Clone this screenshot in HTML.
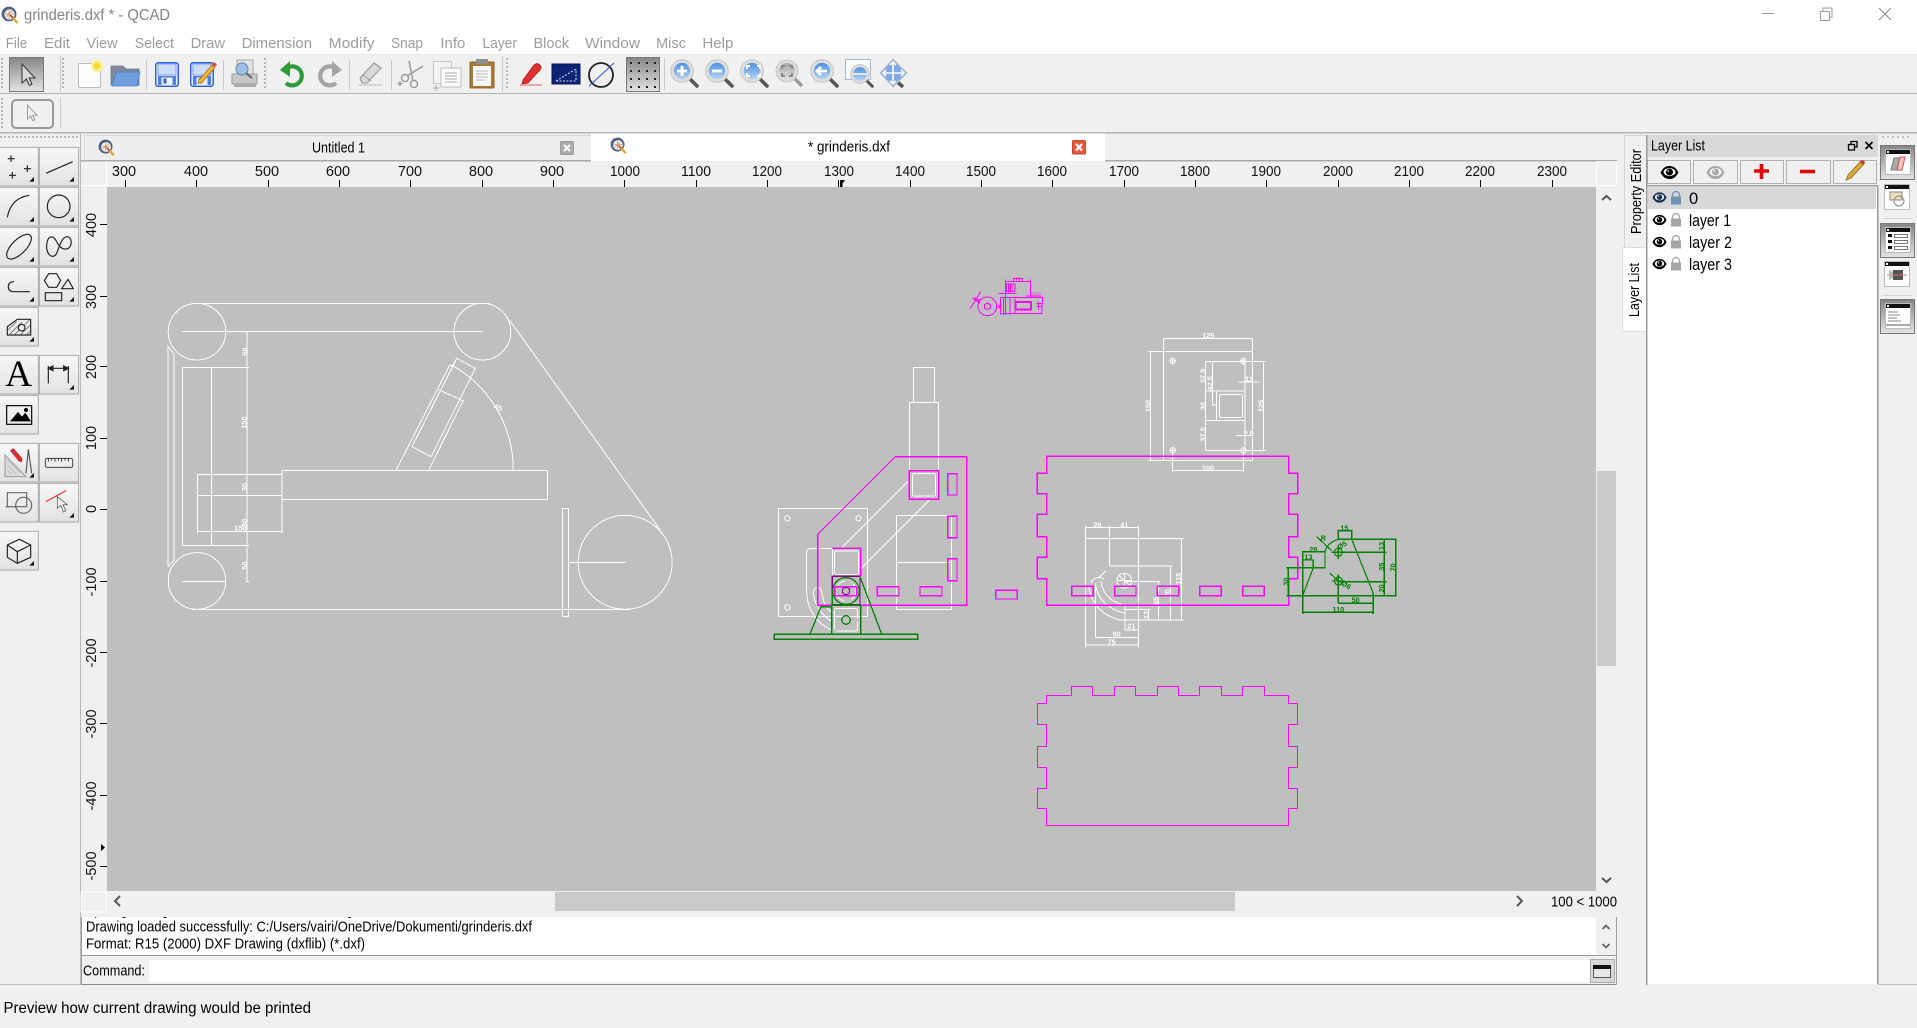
<!DOCTYPE html>
<html><head><meta charset="utf-8"><title>grinderis.dxf * - QCAD</title>
<style>
html,body{margin:0;padding:0;background:#f0f0f0;overflow:hidden}
svg{display:block}
text{font-family:"Liberation Sans",sans-serif;fill:#000}
.m{font-size:15px;fill:#9c9c9c}
.r{font-size:14.5px;text-anchor:middle;fill:#111}
.d *{vector-effect:non-scaling-stroke}
.d{fill:none;stroke-width:1;shape-rendering:crispEdges}
.d text{stroke:none;text-anchor:middle;font-size:22px;font-weight:bold}
.w{stroke:#fff}.w text{fill:#fff}
.p{stroke:#f0f}.p text{fill:#f0f}
.g{stroke:#008000}.g text{fill:#008000}
.c{shape-rendering:crispEdges}
</style></head><body>
<svg xmlns="http://www.w3.org/2000/svg" width="1917" height="1028" viewBox="0 0 1917 1028">
<defs>
<linearGradient id="b" x1="0" y1="0" x2="0" y2="1"><stop offset="0" stop-color="#f7f7f7"/><stop offset="1" stop-color="#e2e2e2"/></linearGradient>
<linearGradient id="a" x1="0" y1="0" x2="0" y2="1"><stop offset="0" stop-color="#868686"/><stop offset="1" stop-color="#e4e4e4"/></linearGradient>
<linearGradient id="zb" x1="0" y1="0" x2="0" y2="1"><stop offset="0" stop-color="#4f92e2"/><stop offset="1" stop-color="#b5d3f2"/></linearGradient>
<linearGradient id="zg" x1="0" y1="0" x2="0" y2="1"><stop offset="0" stop-color="#a8a8a8"/><stop offset="1" stop-color="#dcdcdc"/></linearGradient>
<clipPath id="lg"><rect x="82" y="917" width="1514" height="38"/></clipPath>
<symbol id="q" viewBox="0 0 18 18" overflow="visible">
<circle cx="8" cy="8" r="7.4" fill="#4e5f86"/><circle cx="8.5" cy="8.5" r="5.2" fill="#f4f1e6"/>
<path d="M4 8h9M8 4v9M5 11l6-6" stroke="#c98f6c" stroke-width=".8" fill="none"/>
<path d="M11 11l5.500 6" stroke="#e0a52e" stroke-width="2.400"/><path d="M9 9l3 3" stroke="#b03a2a" stroke-width="1.500"/>
</symbol>
<symbol id="z" viewBox="0 0 29 29" overflow="visible">
<path d="M19 19l8 8" stroke="#555" stroke-width="3.600" stroke-linecap="round"/><path d="M17 17l3 3" stroke="#aaa" stroke-width="3"/>
<circle cx="12" cy="12" r="11.300" fill="#dedede" stroke="#c4c4c4"/>
<circle cx="12" cy="12" r="8.200" fill="url(#zb)"/>
</symbol>
<symbol id="sv" viewBox="0 0 24 25" overflow="visible">
<rect x=".7" y=".7" width="22.600" height="23.600" rx="2.500" fill="#dfe8fa" stroke="#2d5fd8" stroke-width="1.400"/>
<rect x="3" y="2" width="18" height="11" fill="#cfdcf8" stroke="#6f94e6" stroke-width=".8"/>
<rect x="3" y="14" width="18" height="9" fill="#4f7fe0"/><rect x="6.500" y="15.500" width="11" height="7.500" fill="#eef1f8"/><rect x="8.500" y="16.500" width="3" height="5" fill="#3a62b8"/>
</symbol>
<symbol id="eye" viewBox="0 0 18 14" overflow="visible">
<path d="M.5 7C3 2 6 .8 9 .8S15 2 17.500 7C15 12 12 13.200 9 13.200S3 12 .5 7Z" fill="currentColor"/>
<ellipse cx="9" cy="6.600" rx="5.600" ry="3.800" fill="#fff"/><circle cx="9" cy="6.600" r="3.300" fill="currentColor"/><circle cx="7.800" cy="5.600" r=".8" fill="#fff"/>
</symbol>
<symbol id="lk" viewBox="0 0 10 14" overflow="visible">
<rect x="0" y="5.500" width="10" height="8" fill="currentColor"/><path d="M1.500 6V4a3.500 3.500 0 017 0v2" fill="none" stroke="currentColor" stroke-width="1.300"/>
</symbol>
<symbol id="win" viewBox="0 0 26 26" overflow="visible">
<rect x=".5" y=".5" width="25" height="25" fill="#fff" stroke="#bbb"/><rect x="1" y="1" width="24" height="4" fill="#111"/><rect x="2" y="2" width="2" height="2" fill="#fff"/>
</symbol>
</defs>

<!-- title and menu -->
<rect width="1917" height="54" fill="#fff"/>
<rect y="54" width="1917" height="1" fill="#e8e8e8"/>
<use href="#q" x="1" y="6" width="18" height="18"/>
<text x="24" y="20" font-size="15.500" style="fill:#848484" textLength="146" lengthAdjust="spacingAndGlyphs">grinderis.dxf * - QCAD</text>
<g class="c" stroke="#999" fill="none"><path d="M1762 13.500h12"/><rect x="1820.500" y="11.500" width="9" height="9"/><path d="M1823 11v-3h9v9h-2.500"/></g>
<path d="M1879 8l12 12M1891 8l-12 12" stroke="#8a8a8a" fill="none"/>
<text class="m" x="5.700" y="48" textLength="21.600" lengthAdjust="spacingAndGlyphs">File</text>
<text class="m" x="44" y="48" textLength="26" lengthAdjust="spacingAndGlyphs">Edit</text>
<text class="m" x="86.500" y="48" textLength="31" lengthAdjust="spacingAndGlyphs">View</text>
<text class="m" x="134.700" y="48" textLength="39.300" lengthAdjust="spacingAndGlyphs">Select</text>
<text class="m" x="190.600" y="48" textLength="34.400" lengthAdjust="spacingAndGlyphs">Draw</text>
<text class="m" x="241.600" y="48" textLength="70.400" lengthAdjust="spacingAndGlyphs">Dimension</text>
<text class="m" x="328.600" y="48" textLength="46" lengthAdjust="spacingAndGlyphs">Modify</text>
<text class="m" x="391" y="48" textLength="32" lengthAdjust="spacingAndGlyphs">Snap</text>
<text class="m" x="440.400" y="48" textLength="25" lengthAdjust="spacingAndGlyphs">Info</text>
<text class="m" x="482.400" y="48" textLength="34.600" lengthAdjust="spacingAndGlyphs">Layer</text>
<text class="m" x="533.500" y="48" textLength="35.500" lengthAdjust="spacingAndGlyphs">Block</text>
<text class="m" x="585" y="48" textLength="55" lengthAdjust="spacingAndGlyphs">Window</text>
<text class="m" x="656" y="48" textLength="30" lengthAdjust="spacingAndGlyphs">Misc</text>
<text class="m" x="702.400" y="48" textLength="31" lengthAdjust="spacingAndGlyphs">Help</text>

<!-- toolbars -->
<g class="c">
<rect y="93" width="1917" height="1" fill="#b4b4b4"/><rect y="132" width="1917" height="1.500" fill="#b4b4b4"/>
<path d="M2 58v32M63 58v32M265 58v32M507 58v32M2 98v30" stroke="#b8b8b8" stroke-width="2" stroke-dasharray="2 2"/>
<path d="M60.500 56v36M146.500 60v30M223.500 60v30M349.500 60v30M391.500 60v30M502.500 56v36M664.500 58v32M60.500 98v30" stroke="#c8c8c8"/>
<rect x="9.500" y="57.500" width="34" height="34" fill="url(#a)" stroke="#777"/>
<rect x="626.500" y="57.500" width="33" height="34" fill="url(#a)" stroke="#777"/>
<g fill="#222"><rect x="630" y="62" width="2" height="2"/><rect x="638" y="62" width="2" height="2"/><rect x="646" y="62" width="2" height="2"/><rect x="654" y="62" width="2" height="2"/><rect x="630" y="70" width="2" height="2"/><rect x="638" y="70" width="2" height="2"/><rect x="646" y="70" width="2" height="2"/><rect x="654" y="70" width="2" height="2"/><rect x="630" y="78" width="2" height="2"/><rect x="638" y="78" width="2" height="2"/><rect x="646" y="78" width="2" height="2"/><rect x="654" y="78" width="2" height="2"/><rect x="630" y="86" width="2" height="2"/><rect x="638" y="86" width="2" height="2"/><rect x="646" y="86" width="2" height="2"/><rect x="654" y="86" width="2" height="2"/></g>
</g>
<path d="M22 64v19l4.500-4 2.800 6.500 2.700-1.200-2.800-6.300 5.800 0Z" fill="#d8d8d8" stroke="#333" stroke-width="1"/>
<!-- new -->
<rect x="78.500" y="63.500" width="22" height="24" rx="1" fill="#fdfdfd" stroke="#bbb"/><circle cx="97" cy="66" r="6" fill="#f7f39a"/><circle cx="97" cy="66" r="3.600" fill="#f3e02c"/>
<!-- open -->
<path d="M111 66h12l3 3h13v16h-28Z" fill="#7f8b9c" stroke="#6b7686" stroke-width=".8"/><path d="M112 86l4-14h24l-3 14Z" fill="#6e9fdc" stroke="#4a7fc0" stroke-width=".8"/>
<!-- save -->
<use href="#sv" x="155" y="62" width="24" height="25"/>
<use href="#sv" x="190" y="62" width="24" height="25"/>
<path d="M199 80l13-15 3 2.500-13 15-4 1Z" fill="#f0b63c" stroke="#a86c14" stroke-width=".8"/><path d="M212 64l2-2 3 2.500-2 2.500Z" fill="#e0483a"/>
<!-- print preview -->
<rect x="237" y="60" width="16" height="14" fill="#e2e2e2" stroke="#aaa"/><path d="M232 74h25v10h-25Z" fill="#c6c6c6" stroke="#999"/><rect x="234" y="84" width="22" height="3" fill="#aaa"/><circle cx="242" cy="69" r="6" fill="#9cc0ea" stroke="#6c8fb8" stroke-width="1.200"/><path d="M246 73l6 5" stroke="#666" stroke-width="2"/>
<!-- undo redo -->
<path d="M287 68A9.500 9.500 0 1 1 286 83" fill="none" stroke="#2f9a3c" stroke-width="4.200"/><path d="M280 70l10-9v16Z" fill="#2f9a3c"/>
<path d="M335 68A9.500 9.500 0 1 0 336 83" fill="none" stroke="#a4a4a4" stroke-width="4.200"/><path d="M342 70l-10-9v16Z" fill="#a4a4a4"/>
<!-- erase -->
<path d="M360 78l14-15 7 5-14 15h-5Z" fill="#d8d8d8" stroke="#999" stroke-width="1.100"/><path d="M363 75l8 6" stroke="#999"/><path d="M358 85h24" stroke="#ccc" stroke-width="1.500"/>
<!-- cut -->
<g fill="none" stroke="#9a9a9a" stroke-width="1.500"><path d="M409 61l4 20M423 66l-16 10"/><circle cx="405" cy="78" r="3.500"/><circle cx="414" cy="84" r="3.500"/><path d="M400 81v5M397.500 83.500h5"/></g>
<!-- copy -->
<rect x="433.500" y="61.500" width="18" height="22" fill="#f4f4f4" stroke="#c4c4c4"/><path d="M441 68h20v19h-20Z" fill="#fbfbfb" stroke="#bbb"/><path d="M445 73h12M445 76h12M445 79h12M445 82h12" stroke="#aaa"/><path d="M436 85v6M433 88h6" stroke="#aaa"/>
<!-- paste -->
<rect x="470" y="62" width="24" height="26" rx="1" fill="#a77b3b" stroke="#8a6226"/><rect x="473" y="66" width="18" height="20" fill="#f7f7f7"/><rect x="476" y="59" width="12" height="5" fill="#8e8e8e"/><path d="M476 71h12M476 74h12M476 77h12M476 80h9" stroke="#bbb"/>
<!-- pencil -->
<path d="M523 80l11-15c2-2 4-2 6 0 1.500 2 1.500 3 0 5l-12 13-6 1Z" fill="#e02f2f" stroke="#a81f1f" stroke-width=".8"/><path d="M520 85h22" stroke="#f08a8a" stroke-width="1.600"/>
<!-- dim blue -->
<rect x="552" y="64" width="28" height="20" fill="#0c2274" stroke="#071750"/><path d="M556 81h20v-12M556 81l20-12" stroke="#d4dcf8" stroke-width="1.100" stroke-dasharray="2 1.500" fill="none"/>
<!-- circle line -->
<circle cx="601" cy="75" r="12" fill="none" stroke="#222" stroke-width="1.800"/><path d="M589 86l25-23" stroke="#2f4fe0" stroke-width="1"/>
<!-- zoom icons -->
<use href="#z" x="670" y="59" width="29" height="29"/><path d="M677 71h10M682 66v10" stroke="#fff" stroke-width="2.800"/>
<use href="#z" x="705" y="59" width="29" height="29"/><path d="M712 71h10" stroke="#fff" stroke-width="2.800"/>
<use href="#z" x="740" y="59" width="29" height="29"/><path d="M747 69v-3h3M757 66h3v3M760 73v3h-3M750 76h-3v-3" stroke="#fff" stroke-width="2" fill="none"/>
<path d="M794 78l8 8" stroke="#999" stroke-width="3.400"/><circle cx="787" cy="71" r="11" fill="#dcdcdc" stroke="#c8c8c8"/><circle cx="787" cy="71" r="8" fill="url(#zg)"/><path d="M782 69v-3h3M789 66h3v3M792 73v3h-3M785 76h-3v-3" stroke="#888" stroke-width="2" fill="none"/>
<use href="#z" x="810" y="59" width="29" height="29"/><path d="M817 71h10M821 67l-4 4 4 4" stroke="#fff" stroke-width="2.600" fill="none"/>
<rect x="845.500" y="59.500" width="25" height="20" fill="#fff" stroke="#9bb8e0"/><use href="#z" x="850" y="64" width="24" height="24"/><path d="M853 74h14" stroke="#dbe8f8" stroke-width="2"/>
<path d="M893 78l10 9" stroke="#555" stroke-width="3.600"/><path d="M893 59l14 14-14 14-13-14Z" fill="#7fa8e4" stroke="#c4c4c4"/><path d="M893 62v22M883 73h21M890 65l3-3 3 3M890 81l3 3 3-3M886 70l-3 3 3 3M901 70l3 3-3 3" stroke="#fff" stroke-width="1.600" fill="none"/>
<!-- second toolbar button -->
<rect x="12" y="100" width="41" height="28" rx="4" fill="#f0f0f0" stroke="#999" stroke-width="2"/>
<path d="M27.500 105v14l3.200-3 2 4.600 2-.9-2-4.500 4.200 0Z" fill="#f0f0f0" stroke="#9a9a9a" stroke-width="1"/>

<!-- tab bar -->
<rect x="84.500" y="135.500" width="507" height="25" fill="#eeeeee" stroke="#d8d8d8" class="c"/>
<use href="#q" x="98" y="139" width="17" height="17"/>
<text x="312" y="152.700" font-size="14.500" textLength="53" lengthAdjust="spacingAndGlyphs">Untitled 1</text>
<rect x="560.500" y="141.500" width="13" height="13" rx="1" fill="#ababab" stroke="#9a9a9a"/><path d="M564 145l6 6M570 145l-6 6" stroke="#fff" stroke-width="2"/>
<rect x="1105" y="160" width="511" height="1.500" fill="#aaa" class="c"/>
<rect x="81" y="160" width="510" height="1.500" fill="#aaa" class="c"/>
<rect x="591" y="133.500" width="514" height="27.500" fill="#fff" class="c"/>
<use href="#q" x="610" y="137" width="17" height="17"/>
<text x="808" y="151.700" font-size="14.500" textLength="82" lengthAdjust="spacingAndGlyphs">* grinderis.dxf</text>
<rect x="1072.500" y="140.500" width="13" height="13.500" rx="1" fill="#e25b3c" stroke="#c9452a"/><path d="M1076 144l6 6.500M1082 144l-6 6.500" stroke="#fff" stroke-width="2.200"/>

<!-- canvas -->
<rect x="107" y="187" width="1489" height="704" fill="#bfbfbf" class="c"/>

<!-- rulers -->
<g class="c">
<path d="M80.500 134v850" stroke="#b8b8b8"/>
<path d="M106.500 161v25M81 185.500h25.500" stroke="#fff"/>
<path d="M125.500 180v7M196.500 180v7M268.500 180v7M339.500 180v7M410.500 180v7M482.500 180v7M553.500 180v7M624.500 180v7M696.500 180v7M767.500 180v7M838.500 180v7M910.500 180v7M981.500 180v7M1052.500 180v7M1124.500 180v7M1195.500 180v7M1266.500 180v7M1338.500 180v7M1409.500 180v7M1480.500 180v7M1552.500 180v7" stroke="#000"/>
<path d="M100 224.500h7M100 296.500h7M100 366.500h7M100 438.500h7M100 509.500h7M100 581.500h7M100 652.500h7M100 723.500h7M100 795.500h7M100 866.500h7" stroke="#000"/>
</g>
<path d="M840 180h5l-2.500 3.500v3.500h-2.500Z" fill="#000"/><path d="M101 844v7l4-3.500Z" fill="#000"/>
<text class="r" x="124" y="176">300</text><text class="r" x="196" y="176">400</text><text class="r" x="267" y="176">500</text><text class="r" x="338" y="176">600</text><text class="r" x="410" y="176">700</text><text class="r" x="481" y="176">800</text><text class="r" x="552" y="176">900</text>
<text class="r" x="625" y="176" textLength="30" lengthAdjust="spacingAndGlyphs">1000</text><text class="r" x="696" y="176" textLength="30" lengthAdjust="spacingAndGlyphs">1100</text><text class="r" x="767" y="176" textLength="30" lengthAdjust="spacingAndGlyphs">1200</text><text class="r" x="839" y="176" textLength="30" lengthAdjust="spacingAndGlyphs">1300</text><text class="r" x="910" y="176" textLength="30" lengthAdjust="spacingAndGlyphs">1400</text><text class="r" x="981" y="176" textLength="30" lengthAdjust="spacingAndGlyphs">1500</text><text class="r" x="1052" y="176" textLength="30" lengthAdjust="spacingAndGlyphs">1600</text><text class="r" x="1124" y="176" textLength="30" lengthAdjust="spacingAndGlyphs">1700</text><text class="r" x="1195" y="176" textLength="30" lengthAdjust="spacingAndGlyphs">1800</text><text class="r" x="1266" y="176" textLength="30" lengthAdjust="spacingAndGlyphs">1900</text><text class="r" x="1338" y="176" textLength="30" lengthAdjust="spacingAndGlyphs">2000</text><text class="r" x="1409" y="176" textLength="30" lengthAdjust="spacingAndGlyphs">2100</text><text class="r" x="1480" y="176" textLength="30" lengthAdjust="spacingAndGlyphs">2200</text><text class="r" x="1552" y="176" textLength="30" lengthAdjust="spacingAndGlyphs">2300</text>
<g>
<text class="r" transform="translate(96,225) rotate(-90)">400</text><text class="r" transform="translate(96,297) rotate(-90)">300</text><text class="r" transform="translate(96,367) rotate(-90)">200</text><text class="r" transform="translate(96,438) rotate(-90)">100</text><text class="r" transform="translate(96,509) rotate(-90)">0</text>
<text class="r" transform="translate(96,582) rotate(-90)">-100</text><text class="r" transform="translate(96,653) rotate(-90)">-200</text><text class="r" transform="translate(96,724) rotate(-90)">-300</text><text class="r" transform="translate(96,796) rotate(-90)">-400</text><text class="r" transform="translate(96,866) rotate(-90)">-500</text>
</g>

<!-- left tool panel -->
<g transform="translate(0,130) scale(.33333)">
<path d="M0 21H236" stroke="#bbb" stroke-width="6" stroke-dasharray="6 6"/>
<g fill="url(#b)" stroke="#a8a8a8" stroke-width="3">
<rect x="-3" y="52" width="118" height="116"/><rect x="118" y="52" width="118" height="116"/>
<rect x="-3" y="172" width="118" height="116"/><rect x="118" y="172" width="118" height="116"/>
<rect x="-3" y="292" width="118" height="116"/><rect x="118" y="292" width="118" height="116"/>
<rect x="-3" y="412" width="118" height="116"/><rect x="118" y="412" width="118" height="116"/>
<rect x="-3" y="532" width="118" height="116"/>
<rect x="-3" y="676" width="118" height="116"/><rect x="118" y="676" width="118" height="116"/>
<rect x="-3" y="796" width="118" height="116"/>
<rect x="-3" y="940" width="118" height="116"/><rect x="118" y="940" width="118" height="116"/>
<rect x="-3" y="1060" width="118" height="116"/><rect x="118" y="1060" width="118" height="116"/>
<rect x="-3" y="1204" width="118" height="116"/>
</g>
<g fill="#111">
<path d="M88 155h14v-14ZM208 155h14v-14ZM88 275h14v-14ZM208 275h14v-14ZM88 395h14v-14ZM208 395h14v-14ZM88 515h14v-14ZM208 515h14v-14ZM88 635h14v-14ZM208 779h14v-14ZM88 1043h14v-14ZM208 1163h14v-14ZM88 1307h14v-14Z"/>
</g>
<g fill="none" stroke="#222" stroke-width="3.500">
<path d="M23 86h21M33 76v20M72 116h21M82 106v20M27 136h21M37 126v20"/>
<path d="M138 130l80-35"/>
<path d="M22 262Q32 205 88 196"/><circle cx="176" cy="229" r="34"/>
<ellipse cx="57" cy="350" rx="48" ry="21" transform="rotate(-45 57 350)"/>
<path d="M140 345C142 318 158 312 170 335C178 352 190 362 205 355C218 345 216 320 200 320C185 322 178 350 170 370C160 390 138 375 140 345Z"/>
<path d="M90 485H40Q25 485 25 470Q25 455 42 455"/>
<path d="M133 452L146 431H170L182 452L170 472H146ZM185 476L204 448L220 476ZM136 488H185V512H136Z"/>
<path d="M22 615V590L52 568H92V615Z"/>
<path d="M24 600L50 574M30 612L66 576M44 614L60 598M62 614L92 584M80 614L92 602M72 586L88 570" stroke="#555" stroke-width="2"/>
<circle cx="65" cy="593" r="10" fill="#eee"/>
<path d="M145 708V760M205 708V760M145 715H205"/><path d="M145 715l14-7v14ZM205 715l-14-7v14Z" fill="#222"/>
<rect x="20" y="827" width="75" height="56" stroke="#000"/>
<rect x="136" y="985" width="82" height="27" rx="5" stroke="#444" stroke-width="3"/>
<path d="M145 985v10M155 985v7M165 985v10M175 985v7M185 985v10M195 985v7M205 985v10" stroke-width="2.500"/>
<path d="M15 975V1040H78Z" stroke="#999" fill="#dcdcdc" stroke-width="3"/>
<path d="M22 1020l12 12M22 1005l26 26M22 990l38 38" stroke="#aaa" stroke-width="2"/>
<path d="M85 958L78 1030M85 958L95 1030" stroke="#555"/>
<path d="M22 1088H80V1130H22Z" stroke="#666"/><circle cx="71" cy="1126" r="24" stroke="#666"/><path d="M16 1130h12" stroke="#666"/>
<path d="M138 1115L198 1082" stroke="#f03030"/>
<path d="M172 1100V1135L182 1126L190 1146L197 1142L189 1124H202Z" stroke="#666" fill="#eee" stroke-width="2.500"/>
<path d="M22 1245L58 1228L92 1245V1282L52 1300L22 1282ZM22 1245L52 1265L92 1245M52 1265V1300" stroke="#222"/>
</g>
<text x="56" y="768" font-size="112" text-anchor="middle" style="font-family:'Liberation Serif',serif">A</text>
<path d="M30 874l24-28 12 14 10-12 17 26Z" fill="#000"/><circle cx="78" cy="840" r="6" fill="#000"/>
<path d="M32 962l8-6 26 30 -1 9-8-2Z" fill="#e03030" stroke="#a01818" stroke-width="2"/>
</g>

<!-- drawing: left belt grinder -->
<g class="d w" transform="translate(150,280) scale(.35065,.33333)">
<ellipse cx="134" cy="155" rx="82" ry="85"/><ellipse cx="948" cy="155" rx="81" ry="85"/><ellipse cx="134" cy="903" rx="82" ry="85"/><ellipse cx="1355" cy="847" rx="134" ry="141"/>
<path d="M120 70H968M91 154H948M91 904H216M120 988H1370M1025 120L1455 750"/>
<rect x="1176" y="685" width="18" height="325"/><path d="M1194 847H1356"/>
<path d="M52 860V200L68 222V842L52 860"/>
<rect x="92" y="262" width="185" height="534"/><path d="M176 262V796M277 155V904M272 262H282M272 796H282M272 904H282"/>
<rect x="135" y="583" width="242" height="172"/><path d="M135 646H377M377 572V760M135 750V760"/>
<rect x="377" y="572" width="756" height="86"/>
<path d="M1036 570A342 360 0 0 0 860 255"/>
<path d="M702 570L855 255L865 262M795 570L893 362L885 360M875 235L928 265L802 530L747 500ZM825 330L888 360M875 235L862 258"/>
<text transform="translate(278,215) rotate(-90)">50</text><text transform="translate(275,428) rotate(-90)">150</text><text transform="translate(276,621) rotate(-90)">30</text><text transform="translate(276,729) rotate(-90)">30</text><text x="258" y="752">150</text><text transform="translate(276,857) rotate(-90)">50</text><text x="993" y="390" transform="rotate(20 993 382)">45</text>
</g>

<!-- drawing: middle assembly -->
<g class="d" transform="translate(750,260) scale(.33333)">
<g class="w">
<rect x="490" y="322" width="64" height="106"/><rect x="478" y="428" width="88" height="204"/>
<rect x="487" y="640" width="70" height="68" rx="6"/>
<rect x="439" y="766" width="166" height="282"/><path d="M439 908H605"/>
<path d="M275 863L478 660M333 925L540 718"/>
<rect x="85" y="745" width="268" height="325"/>
<circle cx="112" cy="775" r="8"/><circle cx="326" cy="775" r="8"/><circle cx="112" cy="1042" r="8"/>
<path d="M245 865H185Q170 865 170 880V1000Q175 1080 250 1113M190 1000Q190 982 205 982Q215 985 220 1020Q230 1050 250 1060M190 1000Q195 1050 245 1085"/>
<rect x="253" y="873" width="72" height="70" rx="6"/>
<rect x="254" y="1045" width="69" height="68" rx="6" stroke-dasharray="30 3"/>
<path d="M247 865V948"/>
<circle cx="288" cy="993" r="30" stroke-dasharray="10 8"/>
</g>
<g class="p" stroke-width="1.300">
<path d="M203 823L436 590H650V1036H203Z"/>
<rect x="478" y="632" width="88" height="86"/>
<rect x="593" y="641" width="28" height="64"/><rect x="593" y="769" width="28" height="64"/><rect x="593" y="896" width="28" height="66"/>
<rect x="382" y="980" width="65" height="27"/><rect x="510" y="980" width="66" height="27"/><rect x="737" y="991" width="65" height="26"/>
<path d="M247 865H332V948"/>
<rect x="254" y="980" width="66" height="27"/>
</g>
<rect x="247" y="949" width="83" height="85" stroke="#800080" stroke-width="1.300"/>
<circle cx="288" cy="993" r="11" stroke="#800080"/>
<g class="g" stroke-width="1.300">
<circle cx="288" cy="993" r="40"/>
<rect x="245" y="1036" width="87" height="86"/><circle cx="288" cy="1080" r="13"/>
<rect x="73" y="1123" width="430" height="15"/>
<path d="M180 1122L213 1040H245M330 950L395 1122M247 1000V1036"/>
</g>
<!-- tiny magenta detail -->
<g class="p">
<path d="M767 58V165M767 65H842M842 58V108M790 65V55H818V65M745 100H800M752 112H878L875 160M752 160H878M752 112V165M780 112V165M828 108H875M660 147L692 95M668 115L690 130M775 70V100M760 112V165M795 110V160"/>
<rect x="795" y="125" width="50" height="25"/><rect x="798" y="128" width="44" height="19"/>
<circle cx="712" cy="139" r="28"/><path d="M712 129l9 5v10l-9 5-9-5v-10Z"/>
<path d="M770 72H795V95H770ZM775 78H790M775 84H790M775 90H790M782 72V95M792 55H818M800 52V62M808 52V62M860 130H875M860 140H875M865 125V150M675 118H690M672 112L690 125M745 135L755 145M745 145L755 135" />
<text x="858" y="105" style="font-size:15px;font-weight:normal" opacity=".75">M12</text>
</g>
</g>

<!-- drawing: right panel & views -->
<g class="d" transform="translate(1030,320) scale(.33333)">
<g class="w">
<rect x="401" y="94" width="266" height="327"/>
<path d="M401 55H667M401 55V94M667 55V94M362 94V421M356 94H401M356 421H401M428 452H640M428 391V457M640 391V457"/>
<path d="M526 124V391M526 124H706M526 391H706M701 124V391M526 213H645M526 301H645M559 213V301M645 124V391M548 124V255H559M625 186H688M618 347H668"/>
<rect x="568" y="223" width="70" height="70" rx="5"/>
<circle cx="428" cy="123" r="8"/><circle cx="640" cy="123" r="8"/><circle cx="428" cy="391" r="8"/><circle cx="640" cy="391" r="8"/>
<path d="M418 123H438M428 113V133M630 123H650M640 113V133M418 391H438M428 381V401M630 391H650M640 381V401"/>
<text x="535" y="54">125</text><text transform="translate(361,258) rotate(-90)">150</text><text x="534" y="451">100</text><text transform="translate(701,258) rotate(-90)">125</text>
<text transform="translate(527,168) rotate(-90)">37.5</text><text transform="translate(548,190) rotate(-90)">42.5</text><text transform="translate(526,258) rotate(-90)">30</text><text transform="translate(527,343) rotate(-90)">37.5</text><text x="657" y="184">11</text><text x="656" y="348">2.5</text>
<path d="M167 622H326M167 617V982M326 617V982M238 617V738M167 656H460M454 656V900M238 738H427M421 738V900M285 784H392M386 784V900M270 900H460"/>
<circle cx="283" cy="782" r="22"/><path d="M261 782H305M283 760V804M268 768L298 796"/>
<path d="M176 800Q190 880 270 900M196 790Q205 860 285 880M213 785Q222 840 275 852M183 790A24 24 0 0 1 222 778M205 775L228 752"/>
<path d="M197 790V952M197 952H326M167 975H326M285 855V930M285 930H326M285 868H362M356 868V900"/>
<text x="202" y="622">28</text><text x="283" y="622">41</text><text transform="translate(453,776) rotate(-90)">115</text><text transform="translate(420,820) rotate(-90)">70</text><text transform="translate(385,843) rotate(-90)">65</text><text x="260" y="950">60</text><text x="245" y="973">75</text><text x="304" y="926">21</text><text transform="translate(357,885) rotate(-90)">13</text>
</g>
<g class="p" stroke-width="1.300">
<path d="M50 409H776V460H803V521H776V583H803V650H776V712H803V776H776V856H50V776H22V712H50V650H22V583H50V521H22V460H50Z"/>
<rect x="125" y="799" width="65" height="28"/><rect x="254" y="799" width="64" height="28"/><rect x="382" y="799" width="64" height="28"/><rect x="509" y="799" width="65" height="28"/><rect x="638" y="799" width="65" height="28"/>
</g>
<g class="g" stroke-width="1.200">
<path d="M770 827H1100M775 743V827M770 743H885V695H818V882M885 695Q890 670 925 658H1100M925 628V658M965 628V658M925 632H965M965 658L1030 820V882M925 785V850M925 850H1030M818 877H1030M1097 658V827M1063 658V827M925 697H1070M925 785H1070M818 720H850V743L818 827M905 692L860 650M900 760L922 780"/>
<circle cx="925" cy="697" r="12"/><circle cx="925" cy="783" r="12"/>
<path d="M905 697H945M925 677V717M905 783H945M925 763V803"/>
<text x="943" y="631">15</text><text x="977" y="848">50</text><text x="925" y="876">110</text><text transform="translate(1097,742) rotate(-90)">70</text><text transform="translate(1062,678) rotate(-90)">13</text><text transform="translate(1062,740) rotate(-90)">35</text><text transform="translate(1062,805) rotate(-90)">20</text><text transform="translate(775,785) rotate(-90)">30</text>
<text x="850" y="696">28</text><text x="835" y="719">13</text><text x="880" y="662">R</text><text x="940" y="682" transform="rotate(-30 940 682)">Ø5</text><text x="945" y="802" transform="rotate(30 945 802)">Ø6</text>
</g>
</g>

<!-- lower magenta panel -->
<g class="d p" transform="translate(1030,670) scale(.33333)" stroke-width="1.300">
<path d="M50 76H124V49H188V76H253V49H317V76H382V49H446V76H508V49H575V76H637V49H703V76H776V100H803V163H776V229H803V292H776V355H803V415H776V466H50V415H22V355H50V292H22V229H50V163H22V100H50Z"/>
</g>

<!-- scrollbars -->
<g class="c">
<rect x="81" y="891" width="1536" height="26" fill="#f0f0f0"/>
<rect x="81" y="892" width="25" height="20" fill="#f0f0f0" stroke="#fff"/>
<rect x="555" y="892" width="680" height="19" fill="#c9c9c9"/>
<rect x="1596" y="187" width="21" height="704" fill="#f0f0f0"/>
<rect x="1597" y="471" width="19" height="195" fill="#c9c9c9"/>
<rect x="1596" y="161" width="21" height="26" fill="#f0f0f0"/><path d="M1616.500 161v25M1596 185.500h21M1596.500 161v25" stroke="#fff"/>
<path d="M1596 160.500h21" stroke="#aaa"/>
</g>
<g fill="none" stroke="#555" stroke-width="2">
<path d="M120 896l-5 5 5 5M1517 896l5 5-5 5M1602 200l4.500-4 4.500 4M1602 878l4.500 4 4.500-4"/>
</g>
<text x="1551" y="906.700" font-size="14.500" textLength="66" lengthAdjust="spacingAndGlyphs">100 &lt; 1000</text>

<!-- console -->
<rect x="81" y="917" width="1515" height="38" fill="#fff" class="c"/>
<rect x="1596" y="917" width="20" height="38" fill="#f0f0f0" class="c"/>
<g clip-path="url(#lg)"><text x="86" y="915" font-size="14.500" textLength="320" lengthAdjust="spacingAndGlyphs">Opening drawing: C:/Users/vairi/OneDrive/Dokumenti/grinderis.dxf</text></g>
<text x="86" y="931.700" font-size="14.500" textLength="446" lengthAdjust="spacingAndGlyphs">Drawing loaded successfully: C:/Users/vairi/OneDrive/Dokumenti/grinderis.dxf</text>
<text x="86" y="948.300" font-size="14.500" textLength="279" lengthAdjust="spacingAndGlyphs">Format: R15 (2000) DXF Drawing (dxflib) (*.dxf)</text>
<path d="M1602.500 929l3.500-3.500 3.500 3.500M1602.500 944l3.500 3.500 3.500-3.500" fill="none" stroke="#666" stroke-width="1.800"/>
<g class="c">
<rect x="81" y="955" width="1536" height="29" fill="#f0f0f0"/>
<rect x="149" y="960" width="1441" height="22" fill="#fff"/>
<rect x="1590.500" y="959.500" width="24" height="23" fill="#d8d8d8" stroke="#aaa"/>
<rect x="1593.500" y="965.500" width="17" height="12" fill="#e6e6e6" stroke="#555"/><rect x="1593" y="965" width="18" height="4" fill="#111"/>
<path d="M81 955.500h1536" stroke="#999"/>
<path d="M81 984.500h1536" stroke="#8a8a8a"/>
<path d="M81.500 917v68M1616.500 917v68" stroke="#9a9a9a"/>
<path d="M0 984.500h81M1878 984.500h39" stroke="#bdbdbd"/>
</g>
<text x="83" y="975.700" font-size="14.500" textLength="62" lengthAdjust="spacingAndGlyphs">Command:</text>
<text x="3.500" y="1013" font-size="15.500" textLength="307.500" lengthAdjust="spacingAndGlyphs">Preview how current drawing would be printed</text>

<!-- side tabs -->
<rect x="1624.500" y="135.500" width="22" height="112" fill="#f0f0f0" stroke="#d4d4d4" class="c"/>
<rect x="1622.500" y="247.500" width="24" height="84" fill="#fff" stroke="#dcdcdc" class="c"/>
<text transform="translate(1641,234) rotate(-90)" font-size="14.500" textLength="85" lengthAdjust="spacingAndGlyphs">Property Editor</text>
<text transform="translate(1639,317) rotate(-90)" font-size="14.500" textLength="54" lengthAdjust="spacingAndGlyphs">Layer List</text>

<!-- layer panel -->
<g class="c">
<rect x="1647" y="135" width="231" height="850" fill="#f0f0f0"/>
<rect x="1647" y="135" width="231" height="22" fill="#d9d9d9"/>
<rect x="1647.500" y="160.500" width="43" height="23" fill="#f0f0f0" stroke="#b0b0b0"/>
<rect x="1693.500" y="160.500" width="44" height="23" fill="#f0f0f0" stroke="#b0b0b0"/>
<rect x="1740.500" y="160.500" width="43" height="23" fill="#f0f0f0" stroke="#b0b0b0"/>
<rect x="1786.500" y="160.500" width="44" height="23" fill="#f0f0f0" stroke="#b0b0b0"/>
<rect x="1833.500" y="160.500" width="43" height="23" fill="#f0f0f0" stroke="#b0b0b0"/>
<rect x="1647" y="186" width="231" height="798" fill="#fff"/>
<path d="M1646.500 135v850M1647 185.500h231M1877.500 186v798" stroke="#999" stroke-width="1.500"/>
<rect x="1648" y="187" width="228" height="22" fill="#d8d8d8"/>
</g>
<text x="1651" y="150.700" font-size="14.500" textLength="54" lengthAdjust="spacingAndGlyphs">Layer List</text>
<g fill="none" stroke="#000" stroke-width="1.300"><rect x="1848.500" y="144.500" width="6" height="5.500"/><path d="M1851 144v-2.500h6v5.500h-2"/><path d="M1865.500 142l7 7M1872.500 142l-7 7" stroke-width="1.700"/></g>
<use href="#eye" x="1660" y="165" width="19" height="15" style="color:#000"/>
<use href="#eye" x="1706" y="165" width="19" height="15" style="color:#a8a8a8"/>
<path d="M1754 171h15M1761.500 164v15" stroke="#e00000" stroke-width="3.600" stroke-linejoin="round"/>
<path d="M1800 171.500h15" stroke="#e00000" stroke-width="3.600"/>
<path d="M1846 180l2-5 13-14c2-1 4 1 3 3l-13 14Z" fill="#e0a83a" stroke="#8a6a20" stroke-width=".8"/><path d="M1860 162l1.500-1.500c2-1 4 1 3 3l-1.500 1.500Z" fill="#d83a2a"/>
<use href="#eye" x="1652" y="191.500" width="15" height="12" style="color:#0f2f52"/>
<use href="#lk" x="1671" y="191" width="10" height="14" style="color:#6f93b4"/>
<use href="#eye" x="1652" y="214" width="15" height="12" style="color:#000"/>
<use href="#lk" x="1671" y="213" width="10" height="14" style="color:#a4a4a4"/>
<use href="#eye" x="1652" y="236" width="15" height="12" style="color:#000"/>
<use href="#lk" x="1671" y="235" width="10" height="14" style="color:#a4a4a4"/>
<use href="#eye" x="1652" y="258" width="15" height="12" style="color:#000"/>
<use href="#lk" x="1671" y="257" width="10" height="14" style="color:#a4a4a4"/>
<text x="1689" y="204" font-size="16.500">0</text>
<text x="1689" y="226" font-size="16.500" textLength="42" lengthAdjust="spacingAndGlyphs">layer 1</text>
<text x="1689" y="248" font-size="16.500" textLength="43" lengthAdjust="spacingAndGlyphs">layer 2</text>
<text x="1689" y="270" font-size="16.500" textLength="43" lengthAdjust="spacingAndGlyphs">layer 3</text>

<!-- right dock -->
<g class="c">
<path d="M1882 137h30" stroke="#c0c0c0" stroke-width="2" stroke-dasharray="2 3"/>
<rect x="1880.500" y="145.500" width="34" height="34" fill="url(#a)" stroke="#777"/>
<rect x="1880.500" y="223.500" width="34" height="34" fill="url(#a)" stroke="#777"/>
<rect x="1880.500" y="299.500" width="34" height="34" fill="url(#a)" stroke="#777"/>
<path d="M1883 218.500h29M1883 295.500h29" stroke="#d4d4d4"/>
</g>
<use href="#win" x="1885" y="149" width="26" height="26"/>
<path d="M1891 170l3-12h6l-3 12Z" fill="#aaa" stroke="#777"/><path d="M1897 170l3-13h5l-3 13Z" fill="#f2c4c4" stroke="#d05050"/>
<use href="#win" x="1884" y="184" width="26" height="26"/>
<rect x="1890" y="192" width="12" height="8" fill="#e8dfb8" stroke="#888"/><circle cx="1899" cy="201" r="5" fill="none" stroke="#888"/>
<use href="#win" x="1885" y="227" width="26" height="26"/>
<g class="c"><rect x="1888" y="234" width="4" height="3" fill="#111"/><rect x="1888" y="240" width="4" height="3" fill="#111"/><rect x="1888" y="246" width="4" height="3" fill="#111"/><rect x="1894.500" y="234.500" width="13" height="3" fill="none" stroke="#777"/><rect x="1894.500" y="240.500" width="13" height="3" fill="none" stroke="#777"/><rect x="1894.500" y="246.500" width="13" height="3" fill="none" stroke="#777"/></g>
<use href="#win" x="1884" y="261" width="26" height="26"/>
<rect x="1893" y="270" width="10" height="10" fill="#555"/><path d="M1887 275h20" stroke="#e07070"/><path d="M1889 270l4 2v6l-4 2Z" fill="#bbb"/>
<use href="#win" x="1885" y="303" width="26" height="26"/>
<path d="M1888 312h10M1888 315h12M1888 318h9M1888 321h13" stroke="#888"/><path d="M1886 325h24" stroke="#aaa" stroke-width="2"/>
</svg>
</body></html>
